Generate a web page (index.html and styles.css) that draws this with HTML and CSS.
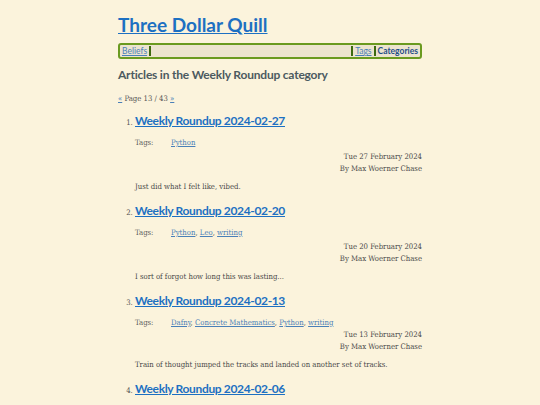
FILE: index.html
```html
<!DOCTYPE html>
<html>
<head>
<meta charset="utf-8">
<link rel="stylesheet" href="styles.css">
</head>
<body>
<div class="page">
  <h1 class="site-title"><a href="#">Three Dollar Quill</a></h1>
  <nav class="nav">
    <a class="nav-link" href="#">Beliefs</a>
    <span class="sep"></span>
    <span class="fill"></span>
    <span class="sep"></span>
    <a class="nav-link" href="#">Tags</a>
    <span class="sep"></span>
    <a class="nav-link current" href="#">Categories</a>
  </nav>
  <h2 class="cat-title">Articles in the Weekly Roundup category</h2>
  <p class="pager"><a href="#">«</a> Page 13 / 43 <a href="#">»</a></p>
  <ol class="articles">
    <li class="article">
      <h3 class="art-title"><a href="#">Weekly Roundup 2024-02-27</a></h3>
      <div class="tags"><span class="tags-label">Tags:</span><span class="tag-list"><a href="#">Python</a></span></div>
      <div class="meta"><div>Tue 27 February 2024</div><div>By Max Woerner Chase</div></div>
      <p class="summary">Just did what I felt like, vibed.</p>
    </li>
    <li class="article">
      <h3 class="art-title"><a href="#">Weekly Roundup 2024-02-20</a></h3>
      <div class="tags"><span class="tags-label">Tags:</span><span class="tag-list"><a href="#">Python</a>, <a href="#">Leo</a>, <a href="#">writing</a></span></div>
      <div class="meta"><div>Tue 20 February 2024</div><div>By Max Woerner Chase</div></div>
      <p class="summary">I sort of forgot how long this was lasting...</p>
    </li>
    <li class="article">
      <h3 class="art-title"><a href="#">Weekly Roundup 2024-02-13</a></h3>
      <div class="tags tags-tight"><span class="tags-label">Tags:</span><span class="tag-list"><a href="#">Dafny</a>, <a href="#">Concrete Mathematics</a>, <a href="#">Python</a>, <a href="#">writing</a></span></div>
      <div class="meta"><div>Tue 13 February 2024</div><div>By Max Woerner Chase</div></div>
      <p class="summary">Train of thought jumped the tracks and landed on another set of tracks.</p>
    </li>
    <li class="article">
      <h3 class="art-title"><a href="#">Weekly Roundup 2024-02-06</a></h3>
    </li>
  </ol>
</div>
</body>
</html>
```
FILE: styles.css
```css
html, body {
  margin: 0;
  padding: 0;
  background: #fbf3dc;
}
body {
  font-family: "DejaVu Serif", serif;
  font-stretch: semi-condensed;
  color: #4a4a4a;
}
.page {
  width: 304px;
  margin: 0 auto;
  padding-top: 13px;
}
a {
  color: #1d70c2;
}
.site-title {
  font-family: Lato, sans-serif;
  font-size: 19px;
  font-weight: 700;
  line-height: 23px;
  margin: 0 0 7px 0;
}
.site-title a {
  color: #1d70c2;
}
.nav {
  display: flex;
  align-items: center;
  height: 12px;
  border: 2px solid #6a9a20;
  border-radius: 3px;
  background: #ece4cf;
  padding: 0 1px;
  font-family: Lato, sans-serif;
  font-size: 8.5px;
  line-height: 12px;
}
.nav-link {
  color: #4a80b8;
  padding: 0 1px;
}
.nav-link.current {
  color: #1f4e88;
  font-weight: 700;
  text-decoration: none;
}
.sep {
  width: 2px;
  height: 10px;
  background: #3d6a10;
  margin: 0 1px;
}
.fill {
  flex: 1;
}
.cat-title {
  font-family: Lato, sans-serif;
  font-size: 12px;
  font-weight: 700;
  letter-spacing: -0.2px;
  color: #4c5a60;
  margin: 8px 0 0 0;
  line-height: 16px;
}
.pager {
  font-size: 7.7px;
  margin: 11px 0 0 0;
  line-height: 10px;
  color: #555;
}
.pager a {
  color: #4a80b8;
}
.articles {
  margin: 8px 0 0 0;
  padding-left: 17px;
  font-size: 7.7px;
}
.article::marker {
  color: #555;
}
.art-title {
  font-family: Lato, sans-serif;
  font-size: 12px;
  font-weight: 700;
  letter-spacing: -0.35px;
  margin: 0;
  line-height: 18px;
  display: inline;
}
.art-title a {
  color: #1d70c2;
}
.tags {
  display: flex;
  margin-top: 8px;
  line-height: 10px;
}
.tags-label {
  width: 36px;
  color: #5e5e5e;
}
.tag-list a {
  color: #4a80b8;
}
.meta {
  text-align: right;
  line-height: 12px;
  margin-top: 3px;
}
.tags-tight + .meta {
  margin-top: 1px;
}
.summary {
  margin: 7px 0 10px 0;
  line-height: 10px;
}
```
